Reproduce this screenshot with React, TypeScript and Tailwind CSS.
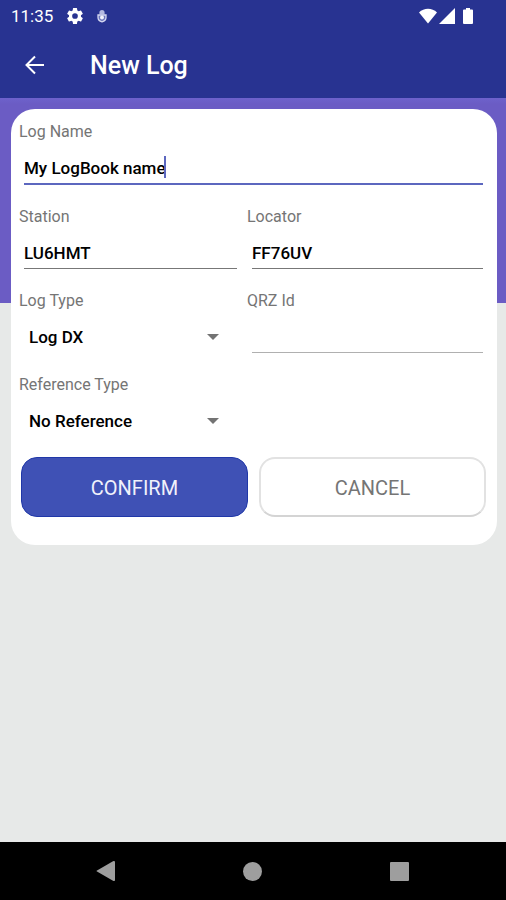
import { useState } from "react";
import type { ReactNode } from "react";

function Field({ id, label, children }: { id: string; label: string; children: ReactNode }) {
  return (
    <div>
      <label htmlFor={id} className="block h-5 text-base leading-[22px] text-[#757575]">
        {label}
      </label>
      <div className="relative mr-1 ml-[5px] flex">{children}</div>
    </div>
  );
}

function TextInput({ id, value, className }: { id: string; value: string; className: string }) {
  const [text, setText] = useState(value);
  return (
    <input
      id={id}
      type="text"
      value={text}
      onChange={(e) => setText(e.target.value)}
      className={`w-full min-w-0 bg-transparent pt-3 text-[17px] leading-[30px] font-medium text-black outline-none ${className}`}
    />
  );
}

function Dropdown({ id, options }: { id: string; options: string[] }) {
  return (
    <>
      <select
        id={id}
        className="h-[42px] w-full appearance-none bg-transparent pt-3 pl-[5px] text-[17px] leading-[30px] font-medium text-black outline-none"
      >
        {options.map((o) => (
          <option key={o}>{o}</option>
        ))}
      </select>
      <svg
        viewBox="0 0 12 6"
        className="pointer-events-none absolute top-6 right-[18px] h-[6px] w-3 fill-[#737373]"
        aria-hidden="true"
      >
        <path d="M0 0h12L6 6z" />
      </svg>
    </>
  );
}

export default function App() {
  return (
    <div className="flex min-h-screen flex-col bg-[#e7e9e8] font-['Roboto','Liberation_Sans',sans-serif]">
      <header className="bg-[#283391] text-white">
        <div className="flex h-8 items-center pr-[33px] pl-[11px]">
          <span className="text-[17px] leading-8">11:35</span>
          <svg viewBox="0 0 24 24" className="ml-3 size-5 fill-white" aria-hidden="true">
            <path
              fillRule="evenodd"
              d="M19.14 12.94c.04-.3.06-.61.06-.94s-.02-.64-.07-.94l2.03-1.58a.49.49 0 0 0 .12-.61l-1.92-3.32a.49.49 0 0 0-.59-.22l-2.39.96a7.03 7.03 0 0 0-1.62-.94l-.36-2.54A.48.48 0 0 0 13.92 2.4h-3.84a.48.48 0 0 0-.48.41l-.36 2.54c-.59.24-1.13.57-1.62.94l-2.39-.96a.49.49 0 0 0-.59.22L2.72 8.87a.48.48 0 0 0 .12.61l2.03 1.58c-.05.3-.09.63-.09.94s.02.64.07.94l-2.03 1.58a.49.49 0 0 0-.12.61l1.92 3.32c.12.22.37.29.59.22l2.39-.96c.5.38 1.03.7 1.62.94l.36 2.54c.05.24.24.41.48.41h3.84c.24 0 .44-.17.47-.41l.36-2.54c.59-.24 1.13-.56 1.62-.94l2.39.96c.22.08.47 0 .59-.22l1.92-3.32a.49.49 0 0 0-.12-.61zM12 15.4a3.4 3.4 0 1 1 0-6.8 3.4 3.4 0 0 1 0 6.8z"
            />
          </svg>
          <svg viewBox="0 0 10 14" className="ml-3 h-[14px] w-[10px]" aria-hidden="true">
            <path d="M2.400 5.500V3.500a2.600 2.600 0 0 1 5.200 0v2z" fill="#b4b9e0" />
            <path
              d="M1 6h8v2.500C9 11 7 12.300 5 12.800 3 12.300 1 11 1 8.500z"
              fill="#6b74bb"
              stroke="#d5d8f0"
              strokeWidth="1.3"
            />
            <circle cx="5" cy="8.500" r="2" fill="#f2f3fc" />
          </svg>
          <div className="ml-auto flex items-center">
            <svg viewBox="0 0 18 16" className="h-4 w-[18px] fill-white" aria-hidden="true">
              <path d="M0 4.500C5-.5 13-.5 18 4.500L9 15.500z" />
            </svg>
            <svg viewBox="0 0 16 16" className="ml-[2px] size-4 fill-white" aria-hidden="true">
              <path d="M16 0v16H0z" />
            </svg>
            <svg viewBox="0 0 10 16" className="ml-2 h-4 w-[10px] fill-white" aria-hidden="true">
              <path d="M3 0h4v1.500h2q1 0 1 1V15q0 1-1 1H1q-1 0-1-1V2.500q0-1 1-1h2z" />
            </svg>
          </div>
        </div>
        <div className="flex h-[66px] items-center pl-[25px]">
          <button type="button" aria-label="Back" className="size-5">
            <svg viewBox="0 0 20 20" className="size-5 fill-none stroke-white stroke-2">
              <path d="M19 10H2M10 1.500L1.500 10l8.500 8.500" />
            </svg>
          </button>
          <h1 className="ml-[45px] pt-[2px] text-[25px] leading-8 font-medium">New Log</h1>
        </div>
      </header>

      <main className="grow bg-[linear-gradient(#6e62cc_0,#6b5cc4_6px,#6b5cc4_205px,transparent_205px)] pt-[11px] pr-[9px] pl-[11px]">
        <form className="rounded-3xl bg-white pt-3 pb-7" onSubmit={(e) => e.preventDefault()}>
          <div className="flex flex-col gap-[21px] pr-[10px] pl-2">
            <Field id="log-name" label="Log Name">
              <TextInput
                id="log-name"
                value="My LogBook name"
                className="border-b-2 border-[#5c67bf] caret-transparent"
              />
              <span className="absolute top-[15px] left-[140px] h-[22px] w-[2px] bg-[#5c67bf]" />
            </Field>
            <div className="grid grid-cols-[222fr_240fr] gap-x-[6px] gap-y-[21px]">
              <Field id="station" label="Station">
                <TextInput id="station" value="LU6HMT" className="border-b border-[#777777]" />
              </Field>
              <Field id="locator" label="Locator">
                <TextInput id="locator" value="FF76UV" className="border-b border-[#777777]" />
              </Field>
              <Field id="log-type" label="Log Type">
                <Dropdown id="log-type" options={["Log DX"]} />
              </Field>
              <Field id="qrz-id" label="QRZ Id">
                <TextInput id="qrz-id" value="" className="border-b border-[#b0b0b0]" />
              </Field>
              <Field id="reference-type" label="Reference Type">
                <Dropdown id="reference-type" options={["No Reference"]} />
              </Field>
            </div>
          </div>
          <div className="mt-[21px] grid grid-cols-2 gap-[11px] pr-[11px] pl-[10px]">
            <button
              type="submit"
              className="h-[60px] rounded-2xl border border-[#2038a8] bg-[#3f51b5] pt-[2px] text-xl text-[#f0f1fb]"
            >
              CONFIRM
            </button>
            <button
              type="button"
              className="h-[60px] rounded-2xl border-2 border-[#e2e2e2] border-b-[#d4d4d4] bg-white pt-[2px] text-xl text-[#757575]"
            >
              CANCEL
            </button>
          </div>
        </form>
      </main>

      <nav className="grid h-[58px] grid-cols-3 items-center justify-items-center bg-black px-[33px]">
        <button type="button" aria-label="Back">
          <svg viewBox="0 0 20 20" className="size-5 fill-[#9e9e9e]">
            <path d="M1 9.500L17 .3q2-1 2 1v17.400q0 2-2 1L1 10.500q-1-.5 0-1z" />
          </svg>
        </button>
        <button type="button" aria-label="Home" className="size-[19px] rounded-full bg-[#9e9e9e]" />
        <button type="button" aria-label="Recent apps" className="size-[19px] rounded-[1px] bg-[#9e9e9e]" />
      </nav>
    </div>
  );
}
